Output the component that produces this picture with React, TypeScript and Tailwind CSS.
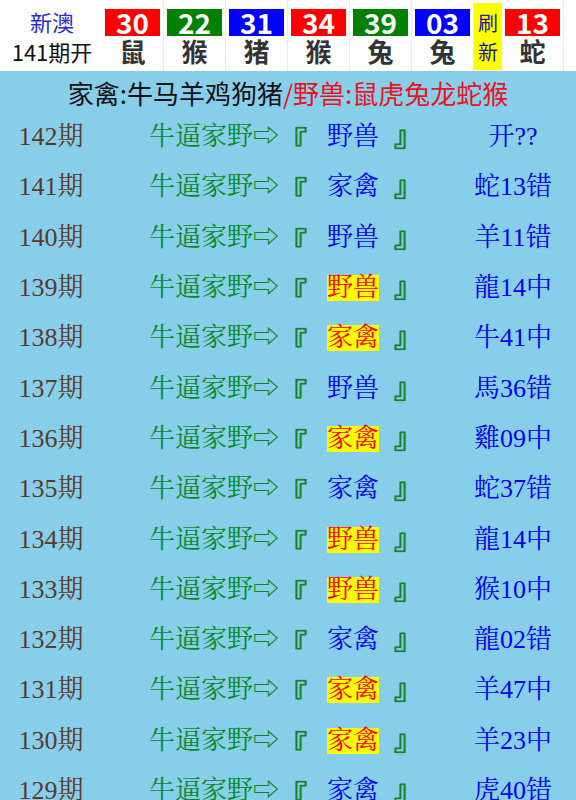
import React from 'react';

type Ball = { num: string; zodiac: string; color: string };

const balls: Ball[] = [
  { num: '30', zodiac: '鼠', color: 'bg-[#ff0000]' },
  { num: '22', zodiac: '猴', color: 'bg-[#008000]' },
  { num: '31', zodiac: '猪', color: 'bg-[#0000ff]' },
  { num: '34', zodiac: '猴', color: 'bg-[#ff0000]' },
  { num: '39', zodiac: '兔', color: 'bg-[#008000]' },
  { num: '03', zodiac: '兔', color: 'bg-[#0000ff]' },
];

type Row = { period: string; pick: string; hit: boolean; result: string };

const rows: Row[] = [
  { period: '142期', pick: '野兽', hit: false, result: '开??' },
  { period: '141期', pick: '家禽', hit: false, result: '蛇13错' },
  { period: '140期', pick: '野兽', hit: false, result: '羊11错' },
  { period: '139期', pick: '野兽', hit: true, result: '龍14中' },
  { period: '138期', pick: '家禽', hit: true, result: '牛41中' },
  { period: '137期', pick: '野兽', hit: false, result: '馬36错' },
  { period: '136期', pick: '家禽', hit: true, result: '雞09中' },
  { period: '135期', pick: '家禽', hit: false, result: '蛇37错' },
  { period: '134期', pick: '野兽', hit: true, result: '龍14中' },
  { period: '133期', pick: '野兽', hit: true, result: '猴10中' },
  { period: '132期', pick: '家禽', hit: false, result: '龍02错' },
  { period: '131期', pick: '家禽', hit: true, result: '羊47中' },
  { period: '130期', pick: '家禽', hit: true, result: '羊23中' },
  { period: '129期', pick: '家禽', hit: false, result: '虎40错' },
];

const sans = "font-['Microsoft_YaHei','Noto_Sans_CJK_SC',sans-serif]";
const serif = "font-['Liberation_Serif','Noto_Serif_CJK_SC','Noto_Sans_CJK_SC',serif]";
const bracket = `${sans} font-bold text-[28px] leading-none text-[#11881e] [text-shadow:0_0_1px_#064a10]`;

function BallCell({ ball }: { ball: Ball }) {
  return (
    <div className="w-[62px] px-[3px] pt-[9px] flex flex-col items-stretch border-r border-[#ececec]">
      <div className={`${ball.color} h-[27px] flex items-center justify-center text-white font-bold text-[28px] leading-[27px]`}>
        {ball.num}
      </div>
      <div className="h-[29px] flex items-center justify-center text-[#333] font-bold text-[26px] leading-[29px]">
        {ball.zodiac}
      </div>
    </div>
  );
}

export default function App() {
  return (
    <div className={`w-[576px] h-[800px] overflow-hidden bg-[#87ceeb] ${sans}`}>
      {/* Header: latest draw */}
      <div className="h-[71px] bg-white flex pl-[2px]">
        <div className="w-[100px] flex flex-col items-center">
          <div className="text-[#2b2bd0] text-[22px] leading-none mt-[10px]">新澳</div>
          <div className="text-[#111] text-[22px] leading-none mt-[8px]">141期开</div>
        </div>
        {balls.map((b, i) => (
          <BallCell key={i} ball={b} />
        ))}
        <div className="w-[28px] mt-[3px] mb-[1px] bg-[#ffff00] flex flex-col items-center justify-center text-[#1a1a8c] text-[20px] leading-[29px]">
          <span>刷</span>
          <span>新</span>
        </div>
        <BallCell ball={{ num: '13', zodiac: '蛇', color: 'bg-[#ff0000]' }} />
      </div>

      {/* Legend */}
      <div className="h-[41px] flex items-center justify-center text-[26px] leading-none pt-[3px]">
        <span className="text-[#111]">家禽:牛马羊鸡狗猪</span>
        <span className="text-[#e8141e]">/野兽:鼠虎兔龙蛇猴</span>
      </div>

      {/* History */}
      <div className={serif}>
        {rows.map((r) => (
          <div key={r.period} className="h-[50.3px] flex items-center text-[26px] leading-none">
            <div className="w-[102px] text-center text-[#5c3a28]">{r.period}</div>
            <div className="w-[348px] pl-[47px] flex items-center text-[#0a8a1e]">
              <span>牛逼家野⇨</span>
              <span className={`${bracket} mt-[6px]`}>『</span>
              <span
                className={`ml-[20px] mr-[15px] ${r.hit ? 'bg-[#ffff00] text-[#ff0000]' : 'text-[#0000ee]'}`}
              >
                {r.pick}
              </span>
              <span className={`${bracket} mb-[6px]`}>』</span>
            </div>
            <div className="flex-1 text-center text-[#0000ee]">{r.result}</div>
          </div>
        ))}
      </div>
    </div>
  );
}
